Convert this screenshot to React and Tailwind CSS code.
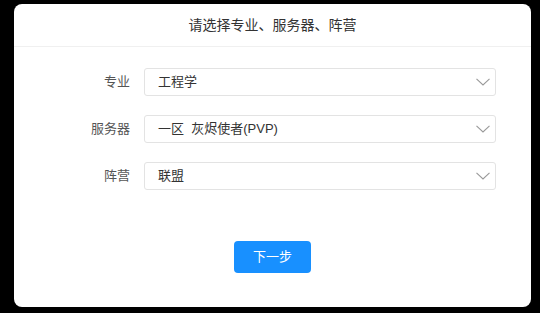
import React from 'react';

const font = { fontFamily: '"Liberation Sans", "Noto Sans CJK SC", sans-serif' };

function Chevron() {
  return (
    <svg width="14" height="8" viewBox="0 0 14 8" fill="none" className="text-[#999]">
      <polyline points="0.5,0.8 7,7 13.5,0.8" stroke="currentColor" strokeWidth="1.1" />
    </svg>
  );
}

function Field({ label, value }) {
  return (
    <div className="flex items-center">
      <div className="w-[60px] text-right text-[13px] text-[#555] mr-[14px]">{label}</div>
      <div className="w-[352px] h-[28px] flex items-center justify-between border border-[#e3e3e3] rounded-[3px] pl-[13px] pr-[4px]">
        <span className="text-[13px] text-[#333] whitespace-pre">{value}</span>
        <span className="mr-[1px] flex"><Chevron /></span>
      </div>
    </div>
  );
}

export default function App() {
  return (
    <div className="w-[540px] h-[313px] bg-black pt-[4px] pl-[14px]" style={font}>
      <div className="w-[517px] h-[303px] bg-white rounded-[8px] flex flex-col">
        <div className="h-[43px] flex items-center justify-center border-b border-[#f0f0f0] text-[14px] text-[#333]">
          请选择专业、服务器、阵营
        </div>
        <div className="pt-[21px] pl-[56px] flex flex-col gap-[19px]">
          <Field label="专业" value="工程学" />
          <Field label="服务器" value="一区  灰烬使者(PVP)" />
          <Field label="阵营" value="联盟" />
        </div>
        <div className="flex justify-center mt-[51px]">
          <button className="w-[77px] h-[32px] rounded-[4px] bg-[#1890ff] text-white text-[13px]">下一步</button>
        </div>
      </div>
    </div>
  );
}
